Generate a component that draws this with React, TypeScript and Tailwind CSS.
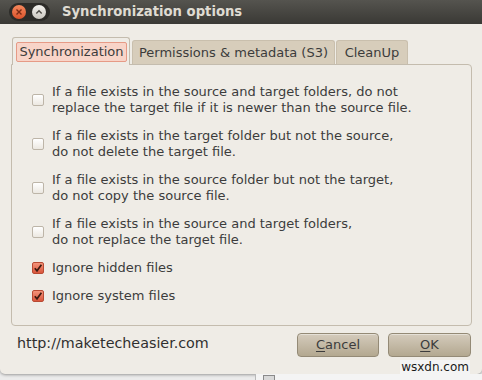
import React from 'react';

const font = { fontFamily: '"DejaVu Sans", "Liberation Sans", sans-serif' };

const options = [
  {
    label: [
      'If a file exists in the source and target folders, do not',
      'replace the target file if it is newer than the source file.',
    ],
    checked: false,
  },
  {
    label: ['If a file exists in the target folder but not the source,', 'do not delete the target file.'],
    checked: false,
  },
  {
    label: ['If a file exists in the source folder but not the target,', 'do not copy the source file.'],
    checked: false,
  },
  {
    label: ['If a file exists in the source and target folders,', 'do not replace the target file.'],
    checked: false,
  },
  { label: ['Ignore hidden files'], checked: true },
  { label: ['Ignore system files'], checked: true },
];

const CheckBox: React.FC<{ checked: boolean }> = ({ checked }) =>
  checked ? (
    <div className="w-[12px] h-[12px] shrink-0 rounded-[2px] border border-[#b84a33] bg-gradient-to-b from-[#f3937a] to-[#d9553b] flex items-center justify-center">
      <svg width="10" height="10" viewBox="0 0 10 10">
        <path d="M1.8 5.2 L4 7.8 L8.4 1.8" fill="none" stroke="#3b1a10" strokeWidth="1.7" />
      </svg>
    </div>
  ) : (
    <div className="w-[12px] h-[12px] shrink-0 rounded-[2px] border border-[#bdb5a8] bg-gradient-to-b from-[#ffffff] to-[#ece8e1]" />
  );

export default function App() {
  return (
    <div className="relative w-[482px] h-[380px] overflow-hidden bg-[#ebebeb]" style={font}>
      {/* dialog */}
      <div className="h-[374px] flex flex-col bg-[#efece6] rounded-b-[5px] shadow-[0_1px_3px_rgba(0,0,0,0.35)]">
        {/* title bar */}
        <div className="h-[24px] flex items-center bg-gradient-to-b from-[#55544f] to-[#3a3935]">
          <div className="ml-[9px] w-[41px] h-[18px] rounded-full bg-[#2c2b28] flex items-center gap-[6px] pl-[3px]">
            <div className="w-[14px] h-[14px] rounded-full bg-gradient-to-b from-[#f5885c] to-[#d9512a] flex items-center justify-center">
              <svg width="8" height="8" viewBox="0 0 8 8">
                <path d="M1.5 1.5 L6.5 6.5 M6.5 1.5 L1.5 6.5" stroke="#7a2a14" strokeWidth="1.4" />
              </svg>
            </div>
            <div className="w-[14px] h-[14px] rounded-full bg-gradient-to-b from-[#f4f3f0] to-[#c9c6bf] flex items-center justify-center">
              <svg width="8" height="8" viewBox="0 0 8 8">
                <path d="M1.3 5.4 L4 2.7 L6.7 5.4" fill="none" stroke="#4d4b46" strokeWidth="1.4" />
              </svg>
            </div>
          </div>
          <span className="ml-[12px] text-[13.2px] font-bold text-[#dfdbd2]">Synchronization options</span>
        </div>

        {/* tabs */}
        <div className="mt-[12px] px-[11px] flex items-end h-[28px] text-[13px] text-[#3c3c3c]">
          <div className="ml-[1px] w-[118px] h-[28px] rounded-t-[3px] border border-b-0 border-[#c4bcae] bg-[#efece6] pt-[4px] pl-[3px] pr-[2px] relative z-10 -mb-[1px]">
            <div className="h-[20px] rounded-[2px] border border-[#e69a86] bg-[#f8d4c8] flex items-center justify-center">
              Synchronization
            </div>
          </div>
          <div className="ml-[2px] w-[203px] h-[24px] rounded-t-[3px] border border-b-0 border-[#c9bfad] bg-[#d7cdbb] flex items-center justify-center">
            Permissions &amp; metadata (S3)
          </div>
          <div className="ml-[1px] w-[72px] h-[24px] rounded-t-[3px] border border-b-0 border-[#c9bfad] bg-[#d7cdbb] flex items-center justify-center">
            CleanUp
          </div>
        </div>

        {/* panel */}
        <div className="mx-[11px] w-[461px] h-[262px] border border-[#c4bcae] rounded-[4px] rounded-tl-none pt-[19px] pl-[20px] flex flex-col gap-[12px] text-[13px] leading-[16px] text-[#3c3c3c]">
          {options.map((o, i) => (
            <div key={i} className="flex items-center gap-[8px]">
              <CheckBox checked={o.checked} />
              <div>
                {o.label.map((l, j) => (
                  <div key={j}>{l}</div>
                ))}
              </div>
            </div>
          ))}
        </div>

        {/* footer */}
        <div className="mt-[7px] px-[11px] flex items-center">
          <span className="ml-[6px] -mt-[3px] text-[14.3px] text-[#2f2f2f]">http://maketecheasier.com</span>
          <div className="ml-auto flex gap-[9px] text-[13px] text-[#3c3c3c]">
            <button className="w-[82px] h-[24px] rounded-[4px] border border-[#948a76] bg-gradient-to-b from-[#d4cbbc] to-[#b3a890] shadow-[inset_0_1px_0_rgba(255,255,255,0.4)]">
              <span className="underline underline-offset-2">C</span>ancel
            </button>
            <button className="w-[83px] h-[24px] rounded-[4px] border border-[#948a76] bg-gradient-to-b from-[#d4cbbc] to-[#b3a890] shadow-[inset_0_1px_0_rgba(255,255,255,0.4)]">
              <span className="underline underline-offset-2">O</span>K
            </button>
          </div>
        </div>
      </div>

      {/* window behind */}
      <div className="absolute left-[255px] top-[374px] w-[227px] h-[6px] border-l border-[#b9b9b9] bg-[#f4f4f4]">
        <div className="ml-[7px] mt-[1px] w-[12px] h-[6px] border border-[#8a8a8a] bg-[#d8d8d8]" />
      </div>

      {/* watermark */}
      <div className="absolute right-[12px] top-[360px] px-[1px] bg-[#f4f4f4] text-[12px] leading-[14px] text-[#1a1a1a]">
        wsxdn.com
      </div>
    </div>
  );
}
